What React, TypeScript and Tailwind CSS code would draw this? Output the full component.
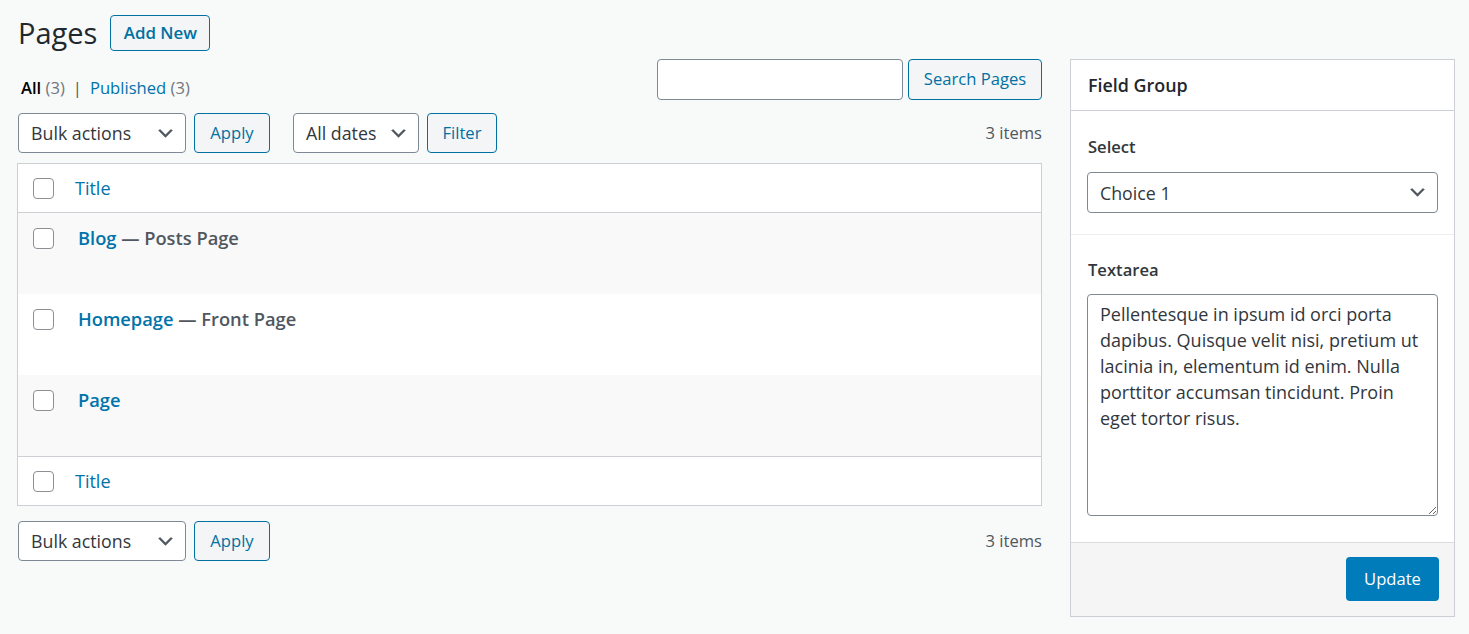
import React from "react";

function Chevron() {
  return (
    <svg width="21" height="21" viewBox="0 0 20 20" aria-hidden="true">
      <path d="M5 6l5 5 5-5 2 1-7 7-7-7 2-1z" fill="#50575e" />
    </svg>
  );
}

function Checkbox() {
  return <div className="h-[21px] w-[21px] shrink-0 rounded-[4px] border border-[#8c8f94] bg-white" />;
}

function SelectBox({ label, className }: { label: string; className: string }) {
  return (
    <div
      className={
        "flex items-center justify-between rounded-[4px] border border-[#7e8993] bg-white pl-[12px] pr-[9px] text-[17.8px] text-[#32373c] " +
        className
      }
    >
      <span className="leading-[24px]">{label}</span>
      <Chevron />
    </div>
  );
}

function SecButton({ label, className }: { label: string; className: string }) {
  return (
    <div
      className={
        "flex items-center justify-center rounded-[4px] border border-[#0071a1] bg-[#f3f5f6] text-[16.6px] text-[#0071a1] " +
        className
      }
    >
      {label}
    </div>
  );
}

function TableNav({ bottom }: { bottom?: boolean }) {
  return (
    <div className="flex h-[40px] items-center justify-between">
      <div className="flex items-center pl-px">
        <SelectBox label="Bulk actions" className="h-[40px] w-[168px]" />
        <SecButton label="Apply" className="ml-[8px] h-[40px] w-[76px]" />
        {!bottom && (
          <>
            <SelectBox label="All dates" className="ml-[23px] h-[40px] w-[126px]" />
            <SecButton label="Filter" className="ml-[8px] h-[40px] w-[70px]" />
          </>
        )}
      </div>
      <div className="text-[16.6px] text-[#50575e]">3 items</div>
    </div>
  );
}

function Row({ title, state, alt }: { title: string; state?: string; alt?: boolean }) {
  return (
    <div className={"flex h-[81px] items-start pl-[15px] pt-[15px] " + (alt ? "bg-[#f9f9f9]" : "bg-white")}>
      <Checkbox />
      <div className="ml-[24px] text-[18.3px] font-semibold leading-[20px]">
        <span className="text-[#0073aa]">{title}</span>
        {state && <span className="text-[#50575e]"> — {state}</span>}
      </div>
    </div>
  );
}

function HeadRow({ top }: { top?: boolean }) {
  return (
    <div
      className={
        "flex h-[49px] items-center bg-white pl-[15px] " +
        (top ? "border-b border-[#ccd0d4]" : "border-t border-[#ccd0d4]")
      }
    >
      <Checkbox />
      <span className="ml-[21px] text-[18px] leading-[22px] text-[#0073aa]">Title</span>
    </div>
  );
}

const lines = [
  "Pellentesque in ipsum id orci porta",
  "dapibus. Quisque velit nisi, pretium ut",
  "lacinia in, elementum id enim. Nulla",
  "porttitor accumsan tincidunt. Proin",
  "eget tortor risus.",
];

export default function App() {
  return (
    <div className="min-h-[634px] bg-[#f8f9f9] pt-[15px] font-['Open_Sans','Noto_Sans',sans-serif] text-[#32373c]">
      <div className="flex h-[36px] items-center pl-[18px]">
        <h1 className="text-[29px] font-normal leading-[36px] text-[#23282d]">Pages</h1>
        <div className="ml-[13px] flex h-[36px] w-[100px] items-center justify-center rounded-[4px] border border-[#0071a1] bg-[#f3f5f6] text-[16.9px] font-semibold text-[#0071a1]">
          Add New
        </div>
      </div>

      <div className="mt-[8px] flex pl-[17px] pr-[14px]">
        <div className="flex-1">
          <div className="flex h-[41px] items-end justify-between">
            <div className="mb-px pl-[4px] text-[16.6px] leading-[22px]">
              <span className="font-semibold text-black">All</span>
              <span className="text-[#72777c]"> (3)</span>
              <span className="px-[8px] text-[#50575e]">|</span>
              <span className="text-[#0073aa]">Published</span>
              <span className="text-[#72777c]"> (3)</span>
            </div>
            <div className="flex h-[41px] items-stretch">
              <div className="w-[246px] rounded-[4px] border border-[#7e8993] bg-white" />
              <SecButton label="Search Pages" className="ml-[5px] w-[134px]" />
            </div>
          </div>

          <div className="mt-[13px]">
            <TableNav />
          </div>

          <div className="mt-[10px] border border-[#ccd0d4] bg-white">
            <HeadRow top />
            <Row title="Blog" state="Posts Page" alt />
            <Row title="Homepage" state="Front Page" />
            <Row title="Page" alt />
            <HeadRow />
          </div>

          <div className="mt-[15px]">
            <TableNav bottom />
          </div>
        </div>

        <div className="ml-[28px] w-[385px] self-start border border-[#ccd0d4] bg-white">
          <div className="flex h-[51px] items-center border-b border-[#ccd0d4] pl-[17px] text-[17.9px] font-semibold text-[#23282d]">
            Field Group
          </div>
          <div className="px-[16px] pb-[21px] pt-[25px]">
            <div className="pl-px text-[16.6px] font-semibold leading-[22px] text-[#32373c]">Select</div>
            <SelectBox label="Choice 1" className="mt-[14px] h-[41px] w-full" />
          </div>
          <div className="border-t border-[#eeeeee] px-[16px] pb-[26px] pt-[24px]">
            <div className="pl-px text-[16.6px] font-semibold leading-[22px] text-[#32373c]">Textarea</div>
            <textarea
              readOnly
              wrap="off"
              className="mt-[13px] block h-[222px] w-full overflow-hidden rounded-[4px] border border-[#7e8993] bg-white px-[12px] pt-[6px] text-[18px] leading-[26px] text-[#32373c] outline-none"
              defaultValue={lines.join("\n")}
            />
          </div>
          <div className="flex h-[74px] justify-end border-t border-[#dcdcde] bg-[#f5f5f5] pr-[15px] pt-[14px]">
            <div className="flex h-[44px] w-[93px] items-center justify-center rounded-[4px] bg-[#007cba] text-[16.6px] text-white">
              Update
            </div>
          </div>
        </div>
      </div>
    </div>
  );
}
